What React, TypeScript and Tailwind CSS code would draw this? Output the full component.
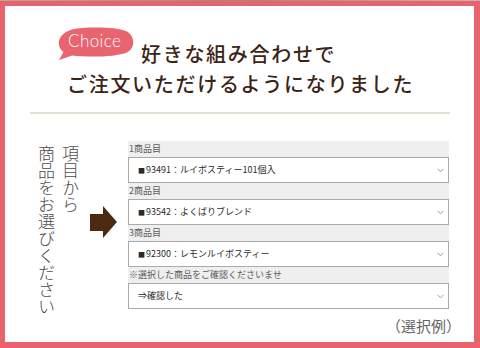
import React from 'react';

const jp = { fontFamily: '"Noto Sans CJK JP", "Noto Sans", sans-serif' };

const fields = [
  { label: '1商品目', value: '93491：ルイボスティー101個入', mark: true },
  { label: '2商品目', value: '93542：よくばりブレンド', mark: true },
  { label: '3商品目', value: '92300：レモンルイボスティー', mark: true },
  { label: '※選択した商品をご確認くださいませ', value: '⇒確認した', mark: false },
];

const Chevron: React.FC = () => (
  <svg width="7" height="5" viewBox="0 0 7 5" className="text-[#9a9a9a]">
    <polyline points="0.5,0.8 3.5,3.8 6.5,0.8" fill="none" stroke="currentColor" strokeWidth="1" />
  </svg>
);

const ChoiceBubble: React.FC = () => (
  <div className="relative w-[80px] h-[34px] shrink-0">
    <svg className="absolute inset-0" width="80" height="34" viewBox="0 0 80 34">
      <path
        d="M16 2.5 C30 -0.5 60 0 70 4 C79 8 80 21 71 25.5 C60 30 32 30.5 16 28.5 L3 33 L7.5 25 C0 20 0.5 7 16 2.5 Z"
        fill="#e8646f"
      />
    </svg>
    <span
      className="relative block pl-[12px] pt-[4px] text-[17px] leading-[20px] text-white tracking-[0.4px] font-light"
      style={{ fontFamily: '"Lato", "Noto Sans", sans-serif' }}
    >
      Choice
    </span>
  </div>
);

const App: React.FC = () => {
  return (
    <div className="w-[480px] h-[348px] flex flex-col bg-white overflow-hidden" style={jp}>
      <div className="h-[1px] bg-gradient-to-r from-[#b8a8a2] via-[#9c8a80] to-[#c4b5ae]" />
      <div className="flex-1 flex flex-col bg-white border-[#e8636e] border-t-[5px] border-l-[5px] border-r-[6px] border-b-[6px]">
        {/* header */}
        <div className="flex items-start pl-[51px] pt-[21px]">
          <ChoiceBubble />
          <span className="ml-[5px] mt-[12px] text-[20px] leading-[30px] tracking-[1.7px] font-medium text-[#3b2416]">
            好きな組み合わせで
          </span>
        </div>
        <div className="pl-[62px] text-[20px] leading-[30px] tracking-[1.7px] font-medium text-[#3b2416]">
          ご注文いただけるようになりました
        </div>
        <div className="mt-[13px] ml-[25px] mr-[24px] h-[2px] bg-[#e3e0d6]" />

        {/* body */}
        <div className="flex items-start pl-[29px]">
          <div className="mt-[31px] w-[48px] h-[180px] [writing-mode:vertical-rl] text-[17px] leading-[24px] font-light text-[#4d4d4d]">
            項目から
            <br />
            商品をお選びください
          </div>
          <svg className="ml-[8px] mt-[92px] shrink-0" width="27" height="32" viewBox="0 0 27 32">
            <rect x="0" y="8" width="14" height="17" fill="#4b2a12" />
            <polygon points="13,0 27,16 13,32" fill="#4b2a12" />
          </svg>
          <div className="ml-[11px] mt-[27px] w-[321px] flex flex-col">
            {fields.map((f) => (
              <div key={f.label} className="flex flex-col">
                <div className="h-[16px] bg-[#efefef] pl-[1px] flex items-center text-[9px] text-[#5a5a5a]">
                  {f.label}
                </div>
                <div className="h-[26px] border border-[#aaaaaa] bg-white flex items-center justify-between pl-[9px] pr-[4px] text-[9px] text-[#2a2a2a]">
                  <span className="flex items-center">
                    {f.mark && <span className="text-[7px] mr-[1px]">■</span>}
                    {f.value}
                  </span>
                  <Chevron />
                </div>
              </div>
            ))}
            <div className="mt-[7px] mr-[-12px] text-right text-[15px] leading-[20px] text-[#666666]">
              （選択例）
            </div>
          </div>
        </div>
      </div>
    </div>
  );
};

export default App;
